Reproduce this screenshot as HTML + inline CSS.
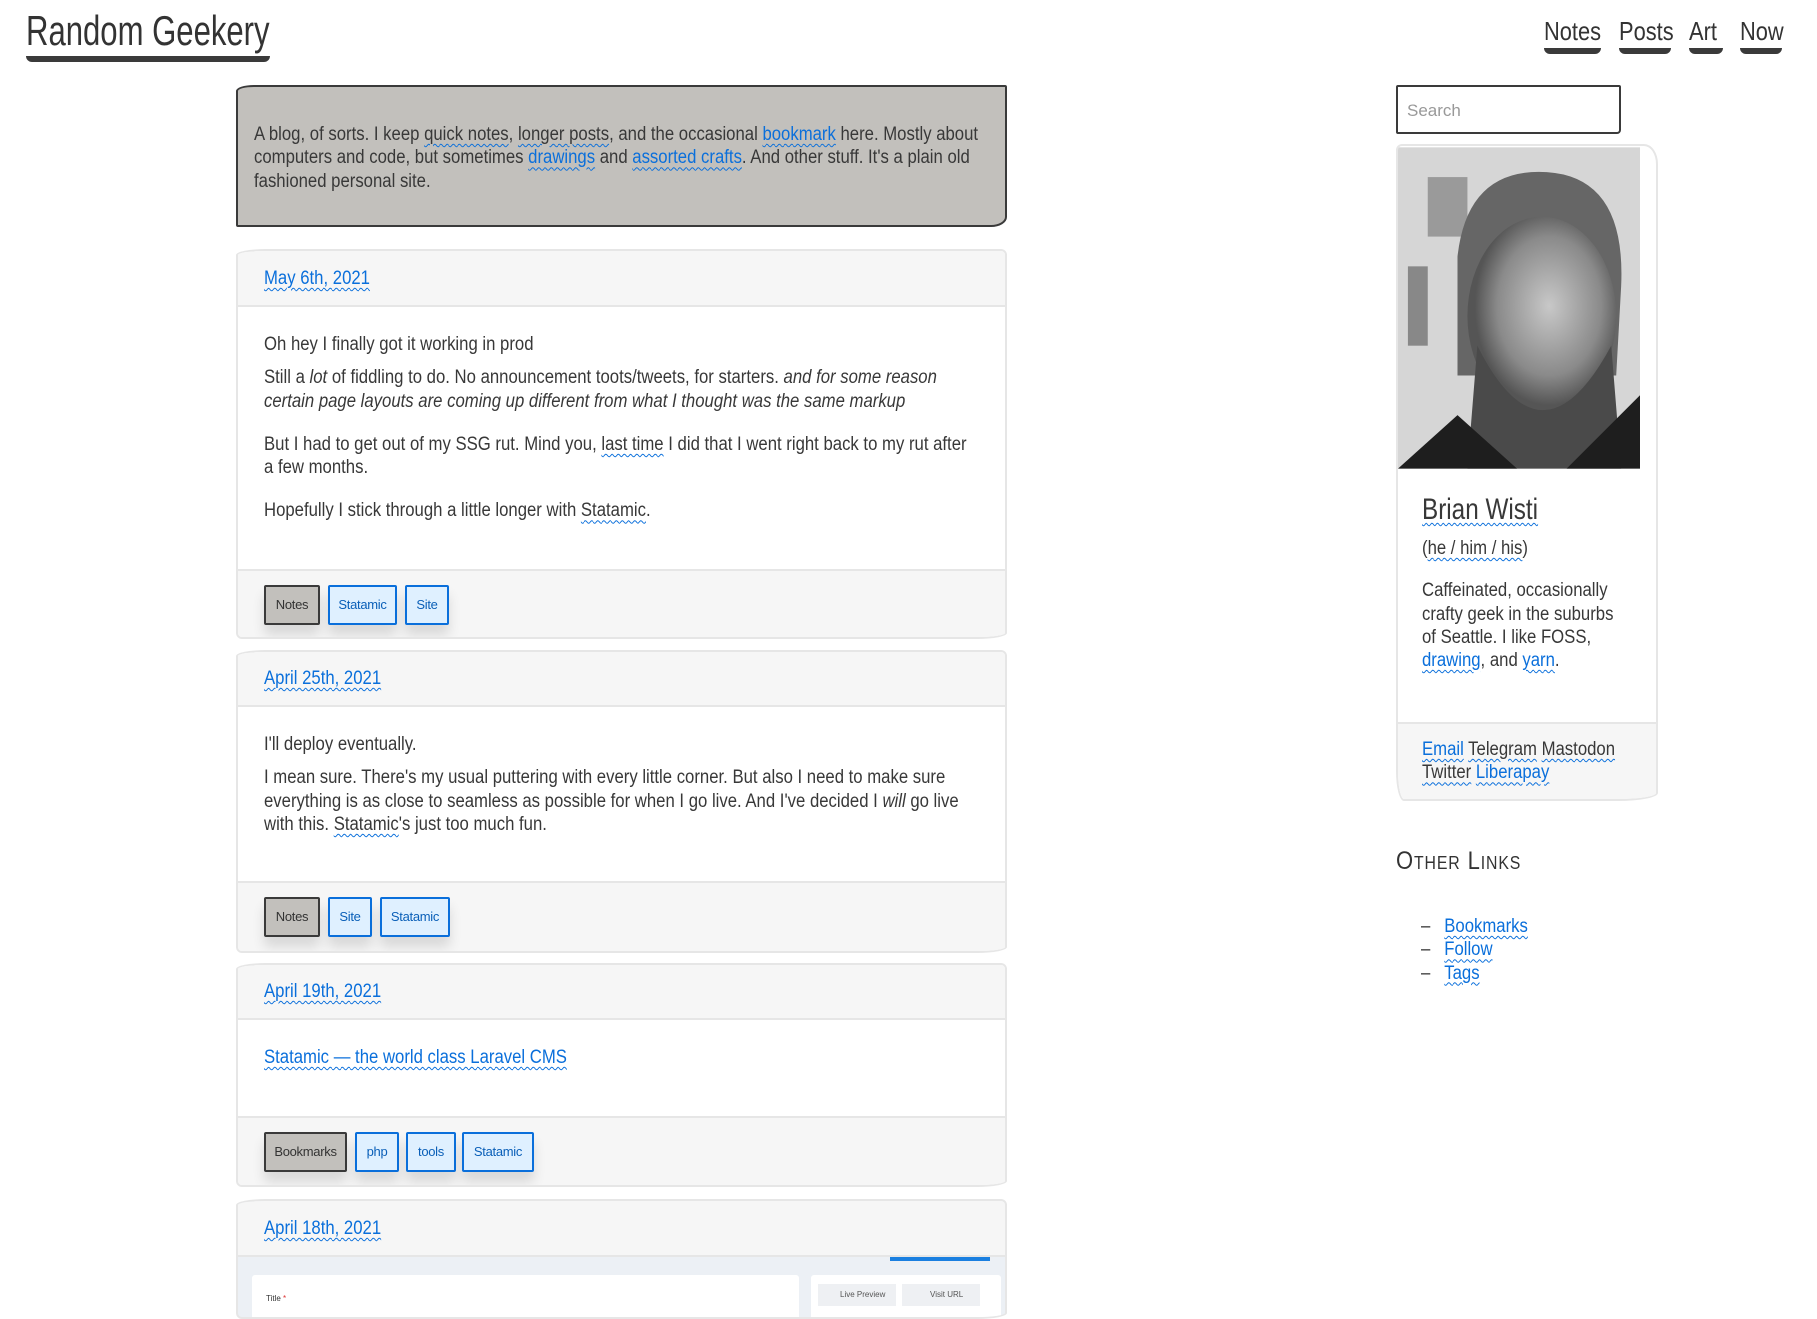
<!DOCTYPE html>
<html><head><meta charset="utf-8">
<style>
*{box-sizing:border-box;margin:0;padding:0}
body{width:1817px;height:1297px;overflow:hidden;background:#fff;color:#383838;font-family:"Liberation Sans",sans-serif;font-size:19px;line-height:23.3px;position:relative}
a{color:#0a6fdb;text-decoration:underline wavy #0a6fdb;text-decoration-thickness:1px;text-underline-offset:3px}
a.d{color:#383838}
.abs{position:absolute}
.sx{transform:scaleX(.88);transform-origin:0 0;width:113.6%}
.title{left:26px;top:6px;font-size:42px;line-height:50px;color:#333;transform:scaleX(.74);transform-origin:0 0;white-space:nowrap}
.tbar{left:26px;top:56px;width:244px;height:6px;background:#3a3a3a;border-radius:0 0 6px 6px}
.nav a{position:absolute;top:14px;font-size:26px;line-height:34px;color:#333;text-decoration:none;transform:scaleX(.84);transform-origin:0 0}
.nav i{position:absolute;top:48px;height:6px;background:#3a3a3a;border-radius:0 0 6px 6px}
.intro{left:236px;top:85px;width:771px;height:142px;background:#c2c0bc;border:2px solid #3a3a3a;border-radius:18px 2px 16px 2px/6px 2px 10px 2px;padding:36px 14px 0 16px}
.card{position:absolute;left:236px;width:771px;border:2px solid #e6e6e6;border-radius:30px 6px 30px 6px/6px 6px 6px 6px;background:#fff;overflow:hidden}
.hd{background:#f6f6f6;border-bottom:2px solid #e6e6e6;padding:0 26px}
.bd{padding:0 26px}
.ft{background:#f6f6f6;border-top:2px solid #e6e6e6;padding:0 26px;position:relative}
.tag{position:absolute;top:14px;height:40px;font-size:13px;line-height:36px;text-align:center;border:2px solid #0a6fdb;background:#dff0ff;color:#0a5fb8;border-radius:2px;box-shadow:0 10px 12px rgba(0,0,0,.12);letter-spacing:-.3px}
.tag.g{background:#c2c0bc;border-color:#3a3a3a;color:#333}
p{margin:0}
</style></head><body>
<div class="abs title">Random Geekery</div>
<div class="abs tbar"></div>
<div class="nav">
<a style="left:1544px">Notes</a><i style="left:1544px;width:57px"></i>
<a style="left:1619px">Posts</a><i style="left:1619px;width:52px"></i>
<a style="left:1689px">Art</a><i style="left:1689px;width:34px"></i>
<a style="left:1740px">Now</a><i style="left:1740px;width:42px"></i>
</div>

<div class="abs intro"><div class="sx">A blog, of sorts. I keep <a class="d">quick notes</a>, <a class="d">longer posts</a>, and the occasional <a>bookmark</a> here. Mostly about computers and code, but sometimes <a>drawings</a> and <a>assorted crafts</a>. And other stuff. It's a plain old fashioned personal site.</div></div>

<div class="card" style="top:249px;height:390px">
<div class="hd" style="height:56px;padding-top:16px"><div class="sx"><a>May 6th, 2021</a></div></div>
<div class="bd" style="height:262px;padding-top:26px"><div class="sx">
<p>Oh hey I finally got it working in prod</p>
<p style="margin-top:10px">Still a <i>lot</i> of fiddling to do. No announcement toots/tweets, for starters. <i>and for some reason certain page layouts are coming up different from what I thought was the same markup</i></p>
<p style="margin-top:20px">But I had to get out of my SSG rut. Mind you, <a class="d">last time</a> I did that I went right back to my rut after a few months.</p>
<p style="margin-top:20px">Hopefully I stick through a little longer with <a class="d">Statamic</a>.</p>
</div></div>
<div class="ft" style="height:72px">
<span class="tag g" style="left:26px;width:56px">Notes</span>
<span class="tag" style="left:90px;width:69px">Statamic</span>
<span class="tag" style="left:167px;width:44px">Site</span>
</div></div>

<div class="card" style="top:650px;height:303px">
<div class="hd" style="height:55px;padding-top:15px"><div class="sx"><a>April 25th, 2021</a></div></div>
<div class="bd" style="height:174px;padding-top:26px"><div class="sx">
<p>I'll deploy eventually.</p>
<p style="margin-top:10px">I mean sure. There's my usual puttering with every little corner. But also I need to make sure everything is as close to seamless as possible for when I go live. And I've decided I <i>will</i> go live with this. <a class="d">Statamic</a>'s just too much fun.</p>
</div></div>
<div class="ft" style="height:74px">
<span class="tag g" style="left:26px;width:56px">Notes</span>
<span class="tag" style="left:90px;width:44px">Site</span>
<span class="tag" style="left:142px;width:70px">Statamic</span>
</div></div>

<div class="card" style="top:963px;height:224px">
<div class="hd" style="height:55px;padding-top:15px"><div class="sx"><a>April 19th, 2021</a></div></div>
<div class="bd" style="height:96px;padding-top:26px"><div class="sx"><a>Statamic — the world class Laravel CMS</a></div></div>
<div class="ft" style="height:73px">
<span class="tag g" style="left:26px;width:83px">Bookmarks</span>
<span class="tag" style="left:117px;width:44px">php</span>
<span class="tag" style="left:168px;width:50px">tools</span>
<span class="tag" style="left:224px;width:72px">Statamic</span>
</div></div>

<div class="card" style="top:1199px;height:120px;background:#ecf0f5">
<div class="hd" style="height:56px;padding-top:16px"><div class="sx"><a>April 18th, 2021</a></div></div>
<div class="abs" style="left:652px;top:56px;width:100px;height:4px;background:#1a7fe0"></div>
<div class="abs" style="left:14px;top:74px;width:547px;height:60px;background:#fff;border-radius:3px;font-size:8px;padding:12px 14px;color:#333">Title <span style="color:#d33">*</span></div>
<div class="abs" style="left:573px;top:74px;width:190px;height:60px;background:#fff;border-radius:3px"></div>
<div class="abs" style="left:580px;top:83px;width:78px;height:22px;background:#eef0f3;font-size:8px;line-height:22px;padding-left:22px;color:#555">Live Preview</div>
<div class="abs" style="left:664px;top:83px;width:78px;height:22px;background:#eef0f3;font-size:8px;line-height:22px;padding-left:28px;color:#555">Visit URL</div>
</div>

<div class="abs" style="left:1396px;top:85px;width:225px;height:49px;border:2px solid #3a3a3a;border-radius:2px 2px 4px 2px;padding:12px 9px;color:#999;font-size:17px">Search</div>

<div class="abs" style="left:1396px;top:144px;width:262px;height:657px;border:2px solid #e6e6e6;border-radius:6px 14px 40px 8px/6px 20px 8px 30px;overflow:hidden;background:#fff">
<svg width="242" height="324" style="display:block" viewBox="0 0 244 324">
<defs><radialGradient id="f" cx=".55" cy=".45" r=".5"><stop offset="0" stop-color="#c8c8c8"/><stop offset=".7" stop-color="#8a8a8a"/><stop offset="1" stop-color="#555"/></radialGradient></defs>
<rect width="244" height="324" fill="#d6d6d6"/>
<rect x="30" y="30" width="40" height="60" fill="#9a9a9a"/><rect x="10" y="120" width="20" height="80" fill="#888"/>
<path d="M60 110 Q70 20 150 25 Q230 30 225 140 L220 230 L60 230 Z" fill="#666"/>
<ellipse cx="145" cy="170" rx="75" ry="100" fill="url(#f)"/>
<path d="M80 200 Q145 330 215 200 L225 324 L70 324 Z" fill="#4a4a4a"/>
<path d="M0 324 L60 270 L120 324 Z M244 250 L244 324 L170 324 Z" fill="#1e1e1e"/>
</svg>
<div style="padding:22px 0 0 24px"><div class="sx" style="width:260px">
<div style="font-size:30px;line-height:36px;transform:scaleX(.92);transform-origin:0 0"><a class="d">Brian Wisti</a></div>
<div style="margin-top:9px">(<a class="d">he / him / his</a>)</div>
<p style="margin-top:19px;width:225px">Caffeinated, occasionally crafty geek in the suburbs of Seattle. I like FOSS, <a>drawing</a>, and <a>yarn</a>.</p>
</div></div>
<div style="position:absolute;left:0;right:0;top:576px;bottom:0;background:#f6f6f6;border-top:2px solid #e6e6e6;padding:14px 24px">
<div class="sx" style="width:250px"><a>Email</a> <a class="d">Telegram</a> <a class="d">Mastodon</a><br><a class="d">Twitter</a> <a>Liberapay</a></div>
</div></div>

<div class="abs" style="left:1396px;top:846px;font-size:25px;line-height:30px;font-variant:small-caps;letter-spacing:1px;color:#333;transform:scaleX(.88);transform-origin:0 0;white-space:nowrap">Other Links</div>
<div class="abs" style="left:1421px;top:915px;line-height:23.3px;transform:scaleX(.88);transform-origin:0 0;white-space:nowrap">
<div>–&nbsp;&nbsp;&nbsp;<a>Bookmarks</a></div>
<div>–&nbsp;&nbsp;&nbsp;<a>Follow</a></div>
<div>–&nbsp;&nbsp;&nbsp;<a>Tags</a></div>
</div>
</body></html>
